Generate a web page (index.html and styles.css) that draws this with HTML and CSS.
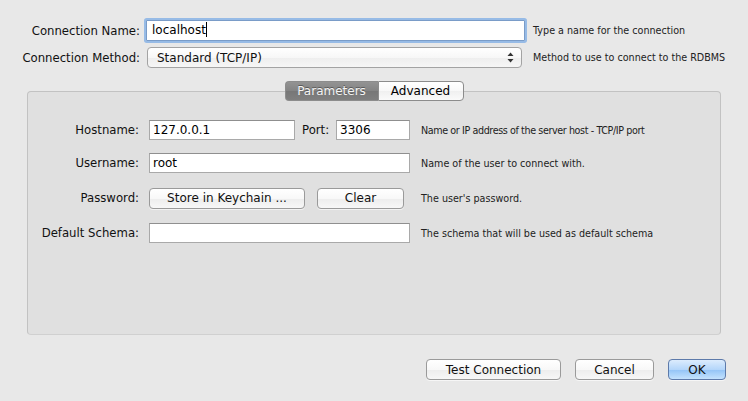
FILE: index.html
```html
<!DOCTYPE html>
<html lang="en">
<head>
    <meta charset="UTF-8">
    <meta name="viewport" content="width=device-width, initial-scale=1.0">
    <title>Connection</title>
    <link rel="stylesheet" href="styles.css">
</head>
<body>
    <div class="dialog">
        <div class="top-form">
            <label class="label">Connection Name:</label>
            <div class="field name-field">localhost<span class="caret"></span></div>
            <span class="hint">Type a name for the connection</span>

            <label class="label">Connection Method:</label>
            <div class="select">
                <span>Standard (TCP/IP)</span>
                <svg width="7" height="11" viewBox="0 0 7 11">
                    <path d="M3.5 0.5 L6.5 4 L0.5 4 Z" fill="#333"/>
                    <path d="M3.5 10.5 L6.5 7 L0.5 7 Z" fill="#333"/>
                </svg>
            </div>
            <span class="hint">Method to use to connect to the RDBMS</span>
        </div>

        <div class="group">
            <div class="tabs">
                <span class="tab active">Parameters</span>
                <span class="tab">Advanced</span>
            </div>

            <div class="row first">
                <label class="label">Hostname:</label>
                <div class="fields">
                    <input class="field host" type="text" value="127.0.0.1">
                    <label class="label port-label">Port:</label>
                    <input class="field port" type="text" value="3306">
                </div>
                <span class="hint narrow">Name or IP address of the server host - TCP/IP port</span>
            </div>

            <div class="row tight">
                <label class="label">Username:</label>
                <div class="fields">
                    <input class="field wide" type="text" value="root">
                </div>
                <span class="hint">Name of the user to connect with.</span>
            </div>

            <div class="row">
                <label class="label">Password:</label>
                <div class="fields">
                    <button class="btn keychain">Store in Keychain ...</button>
                    <button class="btn clear">Clear</button>
                </div>
                <span class="hint">The user's password.</span>
            </div>

            <div class="row">
                <label class="label">Default Schema:</label>
                <div class="fields">
                    <input class="field wide" type="text" value="">
                </div>
                <span class="hint">The schema that will be used as default schema</span>
            </div>
        </div>

        <div class="actions">
            <button class="btn test">Test Connection</button>
            <button class="btn cancel">Cancel</button>
            <button class="btn ok">OK</button>
        </div>
    </div>
</body>
</html>
```

FILE: styles.css
```css
* {
    box-sizing: border-box;
    margin: 0;
    padding: 0;
    font-family: "DejaVu Sans", Verdana, sans-serif;
}

body {
    width: 748px;
    height: 401px;
    background-color: #e8e8e8;
    color: #111;
    font-size: 12px;
    overflow: hidden;
}

.dialog {
    padding-top: 20px;
}

.top-form {
    display: grid;
    grid-template-columns: 146px 387px 1fr;
    grid-auto-rows: 21px;
    row-gap: 6px;
    align-items: center;
}

.label {
    text-align: right;
    padding-right: 6px;
    font-size: 11.7px;
    color: #111;
    white-space: nowrap;
}

.hint {
    font-size: 9.6px;
    color: #222;
    white-space: nowrap;
}

.hint.narrow {
    letter-spacing: -0.4px;
}

.field {
    height: 20px;
    background: white;
    border: 1px solid #a9a9a9;
    border-top-color: #8f8f8f;
    padding: 0 3px;
    font-size: 12px;
    color: #000;
    line-height: 18px;
    outline: none;
}

.name-field {
    width: 379px;
    height: 21px;
    line-height: 19px;
    padding-left: 5px;
    border-color: #7a9cc8;
    box-shadow: 0 0 0 2px #97bbe6;
    border-radius: 1px;
}

.caret {
    display: inline-block;
    width: 1px;
    height: 15px;
    background: #000;
    vertical-align: -3px;
}

.select {
    width: 375px;
    height: 21px;
    margin-left: 1px;
    display: flex;
    align-items: center;
    justify-content: space-between;
    padding: 0 7px 0 9px;
    border: 1px solid #a3a3a3;
    border-radius: 4px;
    background: linear-gradient(#ffffff, #f7f7f7 50%, #eeeeee 51%, #f6f6f6);
    font-size: 12px;
}

.group {
    margin: 23px 27px 0;
    height: 244px;
    background-color: #e0e0e0;
    border: 1px solid #c2c2c2;
    border-bottom-color: #d0d0d0;
    border-radius: 4px;
}

.tabs {
    display: flex;
    justify-content: center;
    margin-top: -11px;
}

.tab {
    height: 20px;
    line-height: 18px;
    padding: 0 11px;
    border: 1px solid #8c8c8c;
    font-size: 12px;
    background: linear-gradient(#ffffff, #f8f8f8 50%, #f0f0f0 51%, #fafafa);
    color: #000;
}

.tab:first-child {
    border-radius: 4px 0 0 4px;
    border-right: none;
}

.tab:last-child {
    border-radius: 0 4px 4px 0;
}

.tab.active {
    width: 93px;
    padding: 0;
    text-align: center;
    background: linear-gradient(#939393, #838383 50%, #777777 51%, #7f7f7f);
    color: #f4f4f4;
    text-shadow: 0 -1px 0 #5a5a5a;
}

.tab:last-child {
    width: 86px;
    padding: 0;
    text-align: center;
}

.row {
    display: flex;
    align-items: center;
    height: 20px;
    margin-top: 15px;
}

.row.first {
    margin-top: 19px;
}

.row.tight {
    margin-top: 13px;
}

.row .label {
    width: 121px;
    padding-right: 10px;
}

.fields {
    width: 261px;
    display: flex;
    align-items: center;
    margin-right: 11px;
}

.field.host {
    width: 146px;
}

.row .port-label {
    width: 41px;
    text-align: left;
    padding: 0 0 0 7px;
}

.field.port {
    width: 74px;
}

.field.wide {
    width: 261px;
}

.btn {
    height: 21px;
    border: 1px solid #9a9a9a;
    border-radius: 4px;
    background: linear-gradient(#ffffff, #f8f8f8 50%, #ededed 51%, #f7f7f7);
    font-size: 12px;
    color: #111;
    cursor: pointer;
    box-shadow: 0 1px 0 rgba(255, 255, 255, 0.6);
}

.btn.keychain {
    width: 156px;
}

.btn.clear {
    width: 87px;
    margin-left: 12px;
}

.actions {
    display: flex;
    justify-content: flex-end;
    gap: 14px;
    margin-top: 24px;
    padding-right: 22px;
}

.btn.test {
    width: 135px;
}

.btn.cancel {
    width: 79px;
}

.btn.ok {
    width: 58px;
    border-color: #5d7aaa;
    background: linear-gradient(#dcecfd, #b4d6fa 50%, #92c3f6 51%, #c4e2fd);
}
```
